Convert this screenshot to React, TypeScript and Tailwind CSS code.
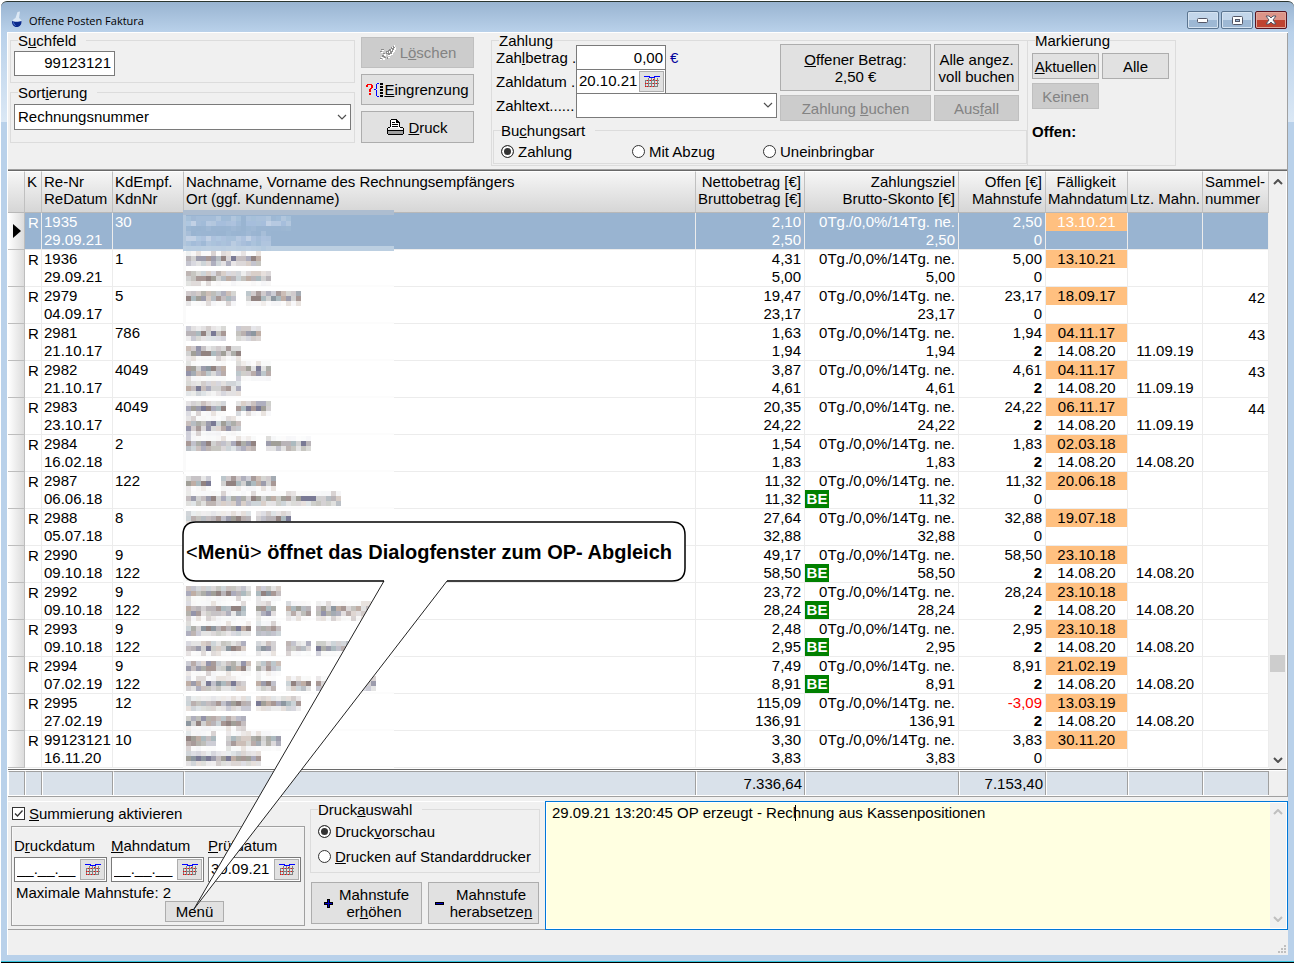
import React, { useState } from 'react'

interface OpenItem {
  nr: string
  date: string
  kd: string
  kdn?: string
  words: number[][]
  netto: string
  brutto: string
  be?: boolean
  offen: string
  stufe: string
  faellig: string
  mahn?: string
  letzte?: string
  sammel?: string
}

// words: [start cell, length in cells, ...] per line of the masked name
const items: OpenItem[] = [
  { nr: '1935', date: '29.09.21', kd: '30', words: [[0, 11, 12, 9], [0, 17]], netto: '2,10', brutto: '2,50', offen: '2,50', stufe: '0', faellig: '13.10.21' },
  { nr: '1936', date: '29.09.21', kd: '1', words: [[0, 15], [0, 17]], netto: '4,31', brutto: '5,00', offen: '5,00', stufe: '0', faellig: '13.10.21' },
  { nr: '2979', date: '04.09.17', kd: '5', words: [[0, 10, 12, 11], []], netto: '19,47', brutto: '23,17', offen: '23,17', stufe: '0', faellig: '18.09.17', sammel: '42' },
  { nr: '2981', date: '21.10.17', kd: '786', words: [[0, 8, 10, 5], [0, 11]], netto: '1,63', brutto: '1,94', offen: '1,94', stufe: '2', faellig: '04.11.17', mahn: '14.08.20', letzte: '11.09.19', sammel: '43' },
  { nr: '2982', date: '21.10.17', kd: '4049', words: [[0, 8, 10, 7], [0, 11]], netto: '3,87', brutto: '4,61', offen: '4,61', stufe: '2', faellig: '04.11.17', mahn: '14.08.20', letzte: '11.09.19', sammel: '43' },
  { nr: '2983', date: '23.10.17', kd: '4049', words: [[0, 8, 10, 7], [0, 11]], netto: '20,35', brutto: '24,22', offen: '24,22', stufe: '2', faellig: '06.11.17', mahn: '14.08.20', letzte: '11.09.19', sammel: '44' },
  { nr: '2984', date: '16.02.18', kd: '2', words: [[0, 14, 16, 9], []], netto: '1,54', brutto: '1,83', offen: '1,83', stufe: '2', faellig: '02.03.18', mahn: '14.08.20', letzte: '14.08.20' },
  { nr: '2987', date: '06.06.18', kd: '122', words: [[0, 5, 7, 11], [0, 31]], netto: '11,32', brutto: '11,32', be: true, offen: '11,32', stufe: '0', faellig: '20.06.18' },
  { nr: '2988', date: '05.07.18', kd: '8', words: [[0, 13, 14, 7], [0, 12]], netto: '27,64', brutto: '32,88', offen: '32,88', stufe: '0', faellig: '19.07.18' },
  { nr: '2990', date: '09.10.18', kd: '9', kdn: '122', words: [[0, 13, 14, 5], [0, 12]], netto: '49,17', brutto: '58,50', be: true, offen: '58,50', stufe: '2', faellig: '23.10.18', mahn: '14.08.20', letzte: '14.08.20' },
  { nr: '2992', date: '09.10.18', kd: '9', kdn: '122', words: [[0, 13, 14, 5], [0, 12, 14, 4, 20, 5, 26, 12]], netto: '23,72', brutto: '28,24', be: true, offen: '28,24', stufe: '2', faellig: '23.10.18', mahn: '14.08.20', letzte: '14.08.20' },
  { nr: '2993', date: '09.10.18', kd: '9', kdn: '122', words: [[0, 13, 14, 5], [0, 12, 14, 4, 20, 5, 26, 7]], netto: '2,48', brutto: '2,95', be: true, offen: '2,95', stufe: '2', faellig: '23.10.18', mahn: '14.08.20', letzte: '14.08.20' },
  { nr: '2994', date: '07.02.19', kd: '9', kdn: '122', words: [[0, 13, 14, 5], [0, 12, 14, 4, 20, 5, 26, 12]], netto: '7,49', brutto: '8,91', be: true, offen: '8,91', stufe: '2', faellig: '21.02.19', mahn: '14.08.20', letzte: '14.08.20' },
  { nr: '2995', date: '27.02.19', kd: '12', words: [[0, 13, 14, 9], [0, 12]], netto: '115,09', brutto: '136,91', offen: '-3,09', stufe: '2', faellig: '13.03.19', mahn: '14.08.20', letzte: '14.08.20' },
  { nr: '99123121', date: '16.11.20', kd: '10', words: [[0, 6, 8, 11], [0, 15]], netto: '3,30', brutto: '3,83', offen: '3,83', stufe: '0', faellig: '30.11.20' }
]

const greys = ['#8c7c7a', '#9c9a92', '#b5b0b4', '#73738f', '#a3928f', '#a9aaa4', '#c2babd', '#87919b', '#bcaaa0', '#9797a8', '#cfcfcf', '#a8b6bc']
const blues = ['#aec3de', '#b7cae2', '#b0c8e0', '#c4d3e6', '#a6bfdc']

function hash(n: number) {
  let h = Math.imul(n + 17, 2654435761) >>> 0
  h ^= h >>> 15
  h = Math.imul(h, 2246822519) >>> 0
  return (h ^ (h >>> 13)) >>> 0
}

// Pixelated stand-in for the masked customer name
function Mosaic({ words, row, selected }: { words: number[][]; row: number; selected: boolean }) {
  const palette = selected ? blues : greys
  const phase = ((1 - (213 + 37 * row)) % 5 + 5) % 5
  const cells: React.ReactNode[] = []

  words.forEach((line, li) => {
    const top = 5 + li * 18
    const bottom = top + 9
    for (let y = phase; y < 38; y += 5) {
      const cover = Math.max(0, Math.min(bottom, y + 5) - Math.max(top, y)) / 5
      if (y + 5 <= top - 1 || y >= bottom + 2) continue
      for (let w = 0; w < line.length; w += 2) {
        for (let c = 0; c < line[w + 1]; c++) {
          const h = hash(c * 131 + y * 17 + line[w + 1] * 977 + w * 53 + li * 7)
          const edge = cover < 0.3 ? (c === 0 || h % 4 === 0 ? 0.35 : 0.08) : cover
          cells.push(
            <rect
              key={`${li}-${y}-${w}-${c}`}
              x={2 + (line[w] + c) * 5}
              y={y}
              width={5}
              height={5}
              fill={palette[h % palette.length]}
              opacity={edge * ((h >>> 8) % 4 === 1 ? 0.6 : 0.95)}
            />
          )
        }
      }
    }
  })

  return (
    <svg width="210" height="36" className="block overflow-visible" shapeRendering="crispEdges" aria-hidden="true">
      {selected ? (
        <>
          <rect x="-1" y="-3" width="211" height="5" fill="#adbdd0" />
          <rect x="-1" y="2" width="3" height="31" fill="#b3c7dc" />
          <rect x="-1" y="33" width="211" height="5" fill="#bccfe1" />
        </>
      ) : (
        <>
          <rect x="-1" y="2" width="3" height="35" fill="#fafafa" />
          <rect x="2" y="35" width="208" height="2" fill="#fcfcfc" />
        </>
      )}
      {cells}
    </svg>
  )
}

function Chevron({ up = false, color = '#505050', bold = false }: { up?: boolean; color?: string; bold?: boolean }) {
  return (
    <svg width="10" height="6" viewBox="0 0 10 6" fill="none" stroke={color} strokeWidth={bold ? 2 : 1.2} aria-hidden="true">
      <path d={up ? 'M1 5 5 1l4 4' : 'M1 1l4 4 4-4'} />
    </svg>
  )
}

function CalendarIcon() {
  return (
    <svg width="16" height="12" viewBox="0 0 16 12" shapeRendering="crispEdges" aria-hidden="true">
      <path d="M4 2h1v9H4zM7 2h1v9H7zM10 2h1v9h-1zM13 2h1v9h-1zM1 4h14v1H1zM1 7h14v1H1zM1 10h13v1H1zM1 4h1v7H1z" fill="#808080" />
      <path d="M0 0h6v1H0zM10 0h6v1h-6zM5 1h6v1H5z" fill="#0000ff" />
      <path d="M3 4h1v1H3zM6 4h1v1H6zM12 4h1v1h-1zM3 7h1v1H3zM9 7h1v1H9zM1 7h1v1H1zM6 10h1v1H6zM1 10h1v1H1zM3 10h1v1H3zM9 10h1v1H9zM12 7h1v1h-1zM9 3h1v1H9z" fill="#ff0000" />
    </svg>
  )
}

function FlaskIcon() {
  return (
    <svg width="12" height="17" viewBox="0 0 12 17" aria-hidden="true">
      <path d="M6.500 1 9 .5 8 7c2 1 3 3 2.500 5-.5 3-2.500 4-5 4S1 14.500 1 12c0-2 1-4 3.500-5z" fill="#dce8f4" />
      <path d="M1 10c2 1 7 1 9.500 0 .3 4-2 6-5 6S.8 13.500 1 10z" fill="#0b2a8c" />
      <path d="M2.500 11.500c.3 1.500 1 2.500 2 3" stroke="#5f86dc" fill="none" />
    </svg>
  )
}

function EraserIcon() {
  return (
    <svg width="17" height="16" viewBox="0 0 17 16" shapeRendering="crispEdges" aria-hidden="true">
      <path d="M14 1h1v1h1v2h-1v2h-1v1h-1v2h-2v1H9V9H7V6h2V5h1V4h2V2h2z" fill="#8c8c8c" />
      <path d="M15 0h1v2h-1zM16 2h1v3h-1v2h-1v1h-1v2h-2v1H9v-1h2V9h2V7h1V5h1V3h1zM8 7h1v1H8zM10 6h1v2h-1zM12 4h1v2h-1zM13 2h1v1h-1z" fill="#fff" />
      <path d="M2 4h3v1H2zM1 6h2v1H1zM4 8h2v1H4zM3 10h3v2H3zM1 13h2v1H1zM5 12h2v1H5zM8 12h1v2H8z" fill="#8c8c8c" />
      <path d="M3 5h2v1H3zM2 7h2v1H2zM5 9h2v2H5zM2 12h2v1H2zM4 13h2v2H4zM9 12h2v1H9zM1 14h2v1H1z" fill="#fff" />
    </svg>
  )
}

function FilterIcon() {
  return (
    <svg width="17" height="14" viewBox="0 0 17 14" shapeRendering="crispEdges" aria-hidden="true">
      <path d="M1 1h5v1H1zM0 2h2v2H0zM5 2h2v3H5zM4 5h2v1H4zM3 6h2v3H3zM3 10h2v2H3z" fill="#ff0000" />
      <path d="M11 0h2v1h-2zM10 1h1v5h-1zM8 6h2v1H8zM10 7h1v6h-1zM11 13h2v1h-2z" fill="#0000ff" />
      <path d="M14 0h3v2h-3zM14 3h3v2h-3zM14 6h3v2h-3zM14 9h3v2h-3zM14 12h3v2h-3z" fill="#000" />
    </svg>
  )
}

function PrinterIcon() {
  return (
    <svg width="17" height="16" viewBox="0 0 17 16" shapeRendering="crispEdges" aria-hidden="true">
      <path d="M4 1h6l3 3v5H3V5h1z" fill="#fff" />
      <path d="M4 0h6v1H4zM10 1h1v1h1v1h1v1h-4V1zM3 1h1v7H3zM12 4h1v4h-1zM5 3h3v1H5zM5 5h6v1H5zM5 7h6v1H5zM1 8h2v1H1zM13 8h3v1h-3zM0 9h1v6H0zM16 9h1v6h-1zM1 11h15v1H1zM1 15h15v1H1z" fill="#000" />
      <path d="M1 9h15v2H1z" fill="#e8e8e8" />
      <path d="M1 12h15v3H1z" fill="#a0a0a0" />
      <path d="M12 9h2v1h-2z" fill="#fff" />
    </svg>
  )
}

const push = 'flex items-center justify-center border text-center leading-[17px] '
const enabled = 'border-[#adadad] bg-[#e1e1e1] text-black'
const disabled = 'border-[#bfbfbf] bg-[#cccccc] text-[#838383]'

function Push({ className = '', off = false, children }: { className?: string; off?: boolean; children: React.ReactNode }) {
  return (
    <button type="button" disabled={off} className={push + (off ? disabled : enabled) + ' ' + className}>
      {children}
    </button>
  )
}

function Group({ title, className = '', inner = '', tight = false, children }: { title: React.ReactNode; className?: string; inner?: string; tight?: boolean; children: React.ReactNode }) {
  return (
    <fieldset className={'min-w-0 border border-[#dcdcdc] ' + className}>
      <legend className={'ml-[7px] h-px leading-[2px] ' + (tight ? '' : 'pr-[10px]')}>{title}</legend>
      <div className={inner}>{children}</div>
    </fieldset>
  )
}

function Radio({ name, checked, onChange, children }: { name: string; checked: boolean; onChange: () => void; children: React.ReactNode }) {
  return (
    <label className="flex items-center gap-1">
      <input
        type="radio"
        name={name}
        checked={checked}
        onChange={onChange}
        className="size-[13px] shrink-0 appearance-none rounded-full border border-[#333333] bg-white checked:bg-[#333333] checked:shadow-[inset_0_0_0_2px_white]"
      />
      <span>{children}</span>
    </label>
  )
}

function DateField({ id, value, className = '' }: { id: string; value: string; className?: string }) {
  return (
    <div className={'flex border border-[#7a7a7a] bg-white p-px ' + className}>
      <input id={id} defaultValue={value} className="min-w-0 flex-1 pb-[2px] pl-px outline-none" />
      <button type="button" aria-label="Kalender" className="flex w-[25px] shrink-0 items-center justify-center border border-[#adadad] bg-[#e1e1e1]">
        <CalendarIcon />
      </button>
    </div>
  )
}

const th = 'border-r border-b border-t border-t-white border-r-[#c0c0c0] border-b-[#b8b8b8] pr-[3px] pl-[2px] pt-px pb-[5px] align-top font-normal leading-[17px] bg-linear-to-b from-[#f6f6f6] to-[#d6d6d6]'

function Row({ item, index, selected, onSelect }: { item: OpenItem; index: number; selected: boolean; onSelect: () => void }) {
  const td = 'h-[37px] border-r border-b p-0 align-top leading-[18px] whitespace-nowrap border-[#ececec]'
  return (
    <tr onClick={onSelect} className={selected ? 'bg-[#99b4d1] text-white' : 'bg-white'}>
      <td className="border-r border-b border-[#bdbdbd] bg-linear-to-r from-white to-[#dcdcdc] p-0 align-middle">
        {selected && (
          <svg width="9" height="14" viewBox="0 0 9 14" className="ml-[5px]" aria-label="Aktuelle Zeile">
            <path d="M0 0v14l8-7z" fill="#000" />
          </svg>
        )}
      </td>
      <td className={td + ' pt-px pl-[3px]'}>R</td>
      <td className={td + ' pl-[2px]'}>{item.nr}<br />{item.date}</td>
      <td className={td + ' pl-[2px]'}>{item.kd}<br />{item.kdn}</td>
      <td className={td}><Mosaic words={item.words} row={index} selected={selected} /></td>
      <td className={td + ' pr-[3px] text-right'}>{item.netto}<br />{item.brutto}</td>
      <td className={td + ' text-right'}>
        <div className="pr-[3px]">0Tg./0,0%/14Tg. ne.</div>
        <div className="flex">
          {item.be && <span className="w-6 bg-[#008000] text-center font-bold text-white">BE</span>}
          <span className="flex-1 pr-[3px]">{item.brutto}</span>
        </div>
      </td>
      <td className={td + ' pr-[3px] text-right'}>
        <span className={item.offen.startsWith('-') ? 'text-[#ff0000]' : ''}>{item.offen}</span><br />
        <span className={item.stufe === '2' ? 'font-bold' : ''}>{item.stufe}</span>
      </td>
      <td className={td + ' text-center'}>
        <div className="bg-[#ffc080]">{item.faellig}</div>
        <div>{item.mahn}</div>
      </td>
      <td className={td + ' text-center'}><br />{item.letzte}</td>
      <td className={td + ' pt-[2px] pr-[3px] text-right'}>{item.sammel}</td>
    </tr>
  )
}

const sums = ['', '', '', '', '', '7.336,64', '', '7.153,40', '', '', '']

export default function App() {
  const [selected, setSelected] = useState(0)
  const [art, setArt] = useState('zahlung')
  const [ausgabe, setAusgabe] = useState('vorschau')

  return (
    <div className="relative min-h-screen bg-white pt-px pb-[2px] pl-px font-['Liberation_Sans',Arial,sans-serif] text-[15px] leading-[17px] text-black">
      <div className="rounded-t-md border-t border-b border-t-[#2a3530] border-b-black bg-[linear-gradient(to_bottom,#99b4d1_0,#b9d1ea_30px,#dbe8f5_120px,#b9d1ea_120px)]">
        {/* Title bar */}
        <header className="flex h-[30px] items-center pr-[7px] pl-[10px]">
          <span className="pt-1"><FlaskIcon /></span>
          <h1 className="ml-[6px] flex-1 pt-[6px] font-['Open_Sans',sans-serif] text-[11px]">Offene Posten Faktura</h1>
          <div className="flex gap-[2px] pt-[6px]">
            <button type="button" aria-label="Minimieren" className="flex h-[18px] w-8 items-center justify-center rounded-xs border border-[#5b7590] bg-linear-to-b from-[#c3d6ea] from-50% to-[#9db8d4] to-50% shadow-[inset_0_0_0_1px_#d5e3f1]">
              <svg width="12" height="6" aria-hidden="true"><rect x="0.500" y="1.500" width="10" height="4" rx="1" fill="#fff" stroke="#535666" /></svg>
            </button>
            <button type="button" aria-label="Maximieren" className="flex h-[18px] w-8 items-center justify-center rounded-xs border border-[#5b7590] bg-linear-to-b from-[#c3d6ea] from-50% to-[#9db8d4] to-50% shadow-[inset_0_0_0_1px_#d5e3f1]">
              <svg width="11" height="9" aria-hidden="true"><rect x="0.500" y="0.500" width="10" height="8" rx="1" fill="#fff" stroke="#535666" /><rect x="3.500" y="3.500" width="4" height="2" fill="#9db8d4" stroke="#535666" /></svg>
            </button>
            <button type="button" aria-label="Schließen" className="flex h-[18px] w-8 items-center justify-center rounded-xs border border-[#5a1420] bg-linear-to-b from-[#dd9488] from-50% to-[#bf4330] to-50% shadow-[inset_0_0_0_1px_#e0a89c]">
              <svg width="12" height="10" viewBox="0 0 12 10" aria-hidden="true">
                <path d="M1 1h3l2 2 2-2h3L8 5l3 4H8L6 7 4 9H1l3-4z" fill="#fff" stroke="#535666" />
              </svg>
            </button>
          </div>
        </header>

        <main className="mx-[6px] border-t border-l border-white bg-[#f0f0f0]">
          {/* Search and booking panel */}
          <div className="flex border-r border-[#a0a0a0] pb-[3px] pl-[2px] whitespace-nowrap">
            <div className="w-[345px] pt-[7px]">
              <Group title={<label htmlFor="such">S<u>u</u>chfeld</label>} className="h-[43px]" inner="pt-[10px] pl-[3px]">
                <input id="such" defaultValue="99123121" className="block h-[25px] w-[101px] border border-[#7a7a7a] bg-white pr-[3px] pb-[2px] text-right outline-none" />
              </Group>
              <Group title={<label htmlFor="sort">Sort<u>i</u>erung</label>} className="mt-[9px] h-[51px]" inner="px-[3px] pt-[11px]">
                <div className="relative">
                  <select id="sort" className="block h-[26px] w-full appearance-none border border-[#7a7a7a] bg-white pb-[2px] pl-[3px] outline-none">
                    <option>Rechnungsnummer</option>
                  </select>
                  <span className="pointer-events-none absolute top-[10px] right-1"><Chevron /></span>
                </div>
              </Group>
            </div>

            <div className="ml-[6px] flex w-[113px] flex-col gap-[6px] pt-1">
              <Push off className="h-[31px] gap-1"><EraserIcon /><span>L<u>ö</u>schen</span></Push>
              <Push className="h-[31px]"><FilterIcon /><span className="pl-px"><u>E</u>ingrenzung</span></Push>
              <Push className="h-8 gap-1"><PrinterIcon /><span><u>D</u>ruck</span></Push>
            </div>

            <div className="ml-[17px] pt-[7px]">
              <Group title="Zahlung" tight className="h-[126px] w-[537px]" inner="pt-[3px]">
                <div className="flex">
                  <div className="w-[285px] pt-px pl-1">
                    <div className="flex items-center">
                      <label htmlFor="betrag" className="w-20">Zah<u>l</u>betrag .</label>
                      <input id="betrag" defaultValue="0,00" className="h-6 w-[90px] border border-b-0 border-[#7a7a7a] bg-white pr-[2px] text-right outline-none" />
                      <span className="pl-1 text-[#00009c]">€</span>
                    </div>
                    <div className="flex items-center">
                      <label htmlFor="datum" className="w-20">Zahldatum .</label>
                      <DateField id="datum" value="20.10.21" className="h-6 w-[90px] border-b-0" />
                    </div>
                    <div className="flex items-center">
                      <label htmlFor="text" className="w-20">Zahltext......</label>
                      <div className="relative flex-1">
                        <select id="text" className="block h-[25px] w-full appearance-none border border-[#7a7a7a] bg-white outline-none">
                          <option></option>
                        </select>
                        <span className="pointer-events-none absolute top-[9px] right-1"><Chevron /></span>
                      </div>
                    </div>
                  </div>
                  <div className="ml-[3px] grid grid-cols-[151px_85px] grid-rows-[47px_26px] gap-x-[3px] gap-y-1">
                    <Push><span><u>O</u>ffener Betrag:<br />2,50 €</span></Push>
                    <Push><span>Alle angez.<br />voll buchen</span></Push>
                    <Push off><span>Zahlung <u>b</u>uchen</span></Push>
                    <Push off><span>Aus<u>f</u>all</span></Push>
                  </div>
                </div>
                <Group title={<>Bu<u>c</u>hungsart</>} className="mt-[9px] ml-px h-[34px]" inner="pt-3 pl-[7px]">
                  <div className="grid grid-cols-[131px_131px_131px]">
                    <Radio name="art" checked={art === 'zahlung'} onChange={() => setArt('zahlung')}>Zahlung</Radio>
                    <Radio name="art" checked={art === 'abzug'} onChange={() => setArt('abzug')}>Mit Abzug</Radio>
                    <Radio name="art" checked={art === 'unein'} onChange={() => setArt('unein')}>Uneinbringbar</Radio>
                  </div>
                </Group>
              </Group>
            </div>

            <div className="pt-[7px]">
              <Group title="Markierung" tight className="h-[126px] w-[148px] border-l-0" inner="pt-3 pl-1">
                <div className="grid grid-cols-[67px_67px] grid-rows-[26px_26px] gap-x-[3px] gap-y-1">
                  <Push><span><u>A</u>ktuellen</span></Push>
                  <Push>Alle</Push>
                  <Push off>Keinen</Push>
                </div>
                <p className="mt-[14px] font-bold">Offen:</p>
              </Group>
            </div>
          </div>

          {/* Open items grid */}
          <div className="flex border-t border-r border-[#a0a0a0]">
            <table className="w-full min-w-0 flex-1 table-fixed border-separate border-spacing-0 border-t border-[#696969]">
              <colgroup>
                <col className="w-[17px]" />
                <col className="w-[17px]" />
                <col className="w-[71px]" />
                <col className="w-[71px]" />
                <col />
                <col className="w-[109px]" />
                <col className="w-[154px]" />
                <col className="w-[87px]" />
                <col className="w-[82px]" />
                <col className="w-[75px]" />
                <col className="w-[66px]" />
              </colgroup>
              <thead>
                <tr className="whitespace-nowrap">
                  <th className={th}></th>
                  <th className={th + ' text-left'}>K</th>
                  <th className={th + ' text-left'}>Re-Nr<br />ReDatum</th>
                  <th className={th + ' text-left'}>KdEmpf.<br />KdnNr</th>
                  <th className={th + ' text-left'}>Nachname, Vorname des Rechnungsempfängers<br />Ort (ggf. Kundenname)</th>
                  <th className={th + ' text-right'}>Nettobetrag [€]<br />Bruttobetrag [€]</th>
                  <th className={th + ' text-right'}>Zahlungsziel<br />Brutto-Skonto [€]</th>
                  <th className={th + ' text-right'}>Offen [€]<br />Mahnstufe</th>
                  <th className={th + ' text-center'}>Fälligkeit<br />Mahndatum</th>
                  <th className={th + ' text-left'}><br />Ltz. Mahn.</th>
                  <th className={th + ' text-left'}>Sammel-<br />nummer</th>
                </tr>
              </thead>
              <tbody>
                {items.map((item, i) => (
                  <Row key={item.nr} item={item} index={i} selected={i === selected} onSelect={() => setSelected(i)} />
                ))}
              </tbody>
              <tfoot>
                <tr>
                  {sums.map((sum, i) => (
                    <td key={i} className="border-t border-b border-t-white border-b-[#a0a0a0] p-0">
                      <div className="border-t border-[#696969] bg-white py-px">
                        <div className="h-6 border-t border-r border-l border-t-[#a0a0a0] border-r-[#a0a0a0] border-l-white bg-[#d9e1ea] pr-[2px] text-right leading-6">{sum}</div>
                      </div>
                    </td>
                  ))}
                </tr>
              </tfoot>
            </table>
            <div className="flex w-[18px] flex-col border-t border-[#696969]">
              <div className="flex flex-1 flex-col items-center justify-between border-r border-b border-r-white border-b-[#696969] pt-2 pb-[6px]">
                <Chevron up bold />
                <div className="mt-[470px] h-[17px] w-[15px] bg-[#cdcdcd]" />
                <span className="mt-auto"><Chevron bold /></span>
              </div>
              <div className="h-[27px] border-t border-b border-t-white border-b-[#a0a0a0]" />
            </div>
          </div>

          {/* Footer panels */}
          <div className="flex pt-1">
            <div className="flex w-[537px] border-t border-b border-t-white border-b-[#a0a0a0]">
              <div className="w-[297px] pt-[3px] pl-[3px]">
                <label className="flex items-center gap-1 pl-px">
                  <span className="relative flex">
                    <input type="checkbox" defaultChecked className="size-[13px] appearance-none border border-[#333333] bg-white" />
                    <svg width="13" height="13" className="pointer-events-none absolute top-0 left-0" fill="none" stroke="#333" strokeWidth="1.300" aria-hidden="true"><path d="M3 6.500 5.500 9 10.500 3.500" /></svg>
                  </span>
                  <span><u>S</u>ummierung aktivieren</span>
                </label>
                <div className="mt-1 h-[100px] border border-[#a0a0a0] pt-[10px] pl-[2px] shadow-[inset_1px_1px_0_#f8f8f8]">
                  <div className="flex gap-1">
                    <div className="w-[93px]">
                      <label htmlFor="druck" className="block">D<u>r</u>uckdatum</label>
                      <DateField id="druck" value="__.__.__" className="mt-[3px] h-[25px]" />
                    </div>
                    <div className="w-[93px]">
                      <label htmlFor="mahn" className="block"><u>M</u>ahndatum</label>
                      <DateField id="mahn" value="__.__.__" className="mt-[3px] h-[25px]" />
                    </div>
                    <div className="w-[93px]">
                      <label htmlFor="pruef" className="block"><u>P</u>rüfdatum</label>
                      <DateField id="pruef" value="30.09.21" className="mt-[3px] h-[25px]" />
                    </div>
                  </div>
                  <p className="mt-[2px] pl-[2px]">Maximale Mahnstufe: 2</p>
                  <Push className="ml-[151px] h-[21px] w-[59px] pb-px">Menü</Push>
                </div>
              </div>

              <div className="ml-[5px] w-[230px] pt-[7px]">
                <Group title={<>Druck<u>a</u>uswahl</>} className="h-16" inner="pt-[13px] pl-[7px]">
                  <div className="flex flex-col gap-2">
                    <Radio name="ausgabe" checked={ausgabe === 'vorschau'} onChange={() => setAusgabe('vorschau')}>Druck<u>v</u>orschau</Radio>
                    <Radio name="ausgabe" checked={ausgabe === 'drucker'} onChange={() => setAusgabe('drucker')}><u>D</u>rucken auf Standarddrucker</Radio>
                  </div>
                </Group>
                <div className="mt-[9px] ml-px grid grid-cols-[111px_111px] grid-rows-[42px] gap-[6px]">
                  <Push className="gap-[6px]">
                    <svg width="9" height="9" shapeRendering="crispEdges" aria-hidden="true"><path d="M3 0h3v3h3v3H6v3H3V6H0V3h3z" fill="#000" /><path d="M4 1h1v3h3v1H5v3H4V5H1V4h3z" fill="#0000c8" /></svg>
                    <span>Mahnstufe<br />er<u>h</u>öhen</span>
                  </Push>
                  <Push className="gap-[6px]">
                    <svg width="9" height="3" shapeRendering="crispEdges" aria-hidden="true"><path d="M0 0h9v3H0z" fill="#000" /><path d="M1 1h7v1H1z" fill="#0000c8" /></svg>
                    <span>Mahnstufe<br />herabsetze<u>n</u></span>
                  </Push>
                </div>
              </div>
            </div>

            <div className="relative flex h-[129px] flex-1 border border-[#0078d7] bg-white p-px">
              <textarea aria-label="Protokoll" defaultValue="29.09.21 13:20:45 OP erzeugt - Rechnung aus Kassenpositionen" className="flex-1 resize-none bg-[#ffffe1] pt-px pl-[5px] outline-none" />
              <span className="absolute top-[3px] left-[249px] h-4 w-px bg-black" />
              <div className="flex w-4 flex-col items-center justify-between bg-[#f0f0f0] pt-[6px] pb-[6px]">
                <Chevron up bold color="#bfbfbf" />
                <Chevron bold color="#bfbfbf" />
              </div>
            </div>
          </div>

          {/* Status bar */}
          <footer className="flex h-[25px] items-end justify-end pr-px pb-px">
            <svg width="9" height="9" shapeRendering="crispEdges" aria-hidden="true">
              <path d="M6 0h2v2H6zM3 3h2v2H3zM6 3h2v2H6zM0 6h2v2H0zM3 6h2v2H3zM6 6h2v2H6z" fill="#bfbfbf" />
            </svg>
          </footer>
        </main>
        <div className="h-[7px] border-b border-[#34c3dc]" />
      </div>

      {/* Annotation bubble pointing at the menu button */}
      <div className="pointer-events-none absolute top-[521px] left-[182px]">
        <svg width="506" height="390" viewBox="0 0 506 390" className="block" aria-hidden="true">
          <path d="M202 60 12 388 265 60z" fill="#fff" />
          <path d="M202 60 12 388 265 60" fill="none" stroke="#222" strokeWidth="1" />
          <path d="M202 60H14Q1 60 1 47V14Q1 1 14 1H490Q503 1 503 14V47Q503 60 490 60H265" fill="#fff" stroke="#000" strokeWidth="1.500" />
        </svg>
        <p className="absolute top-[19px] left-1 text-[20px] leading-6 font-bold whitespace-nowrap">
          <span className="font-normal">&lt;</span>Menü<span className="font-normal">&gt;</span> öffnet das Dialogfenster zum OP- Abgleich
        </p>
      </div>
    </div>
  )
}
